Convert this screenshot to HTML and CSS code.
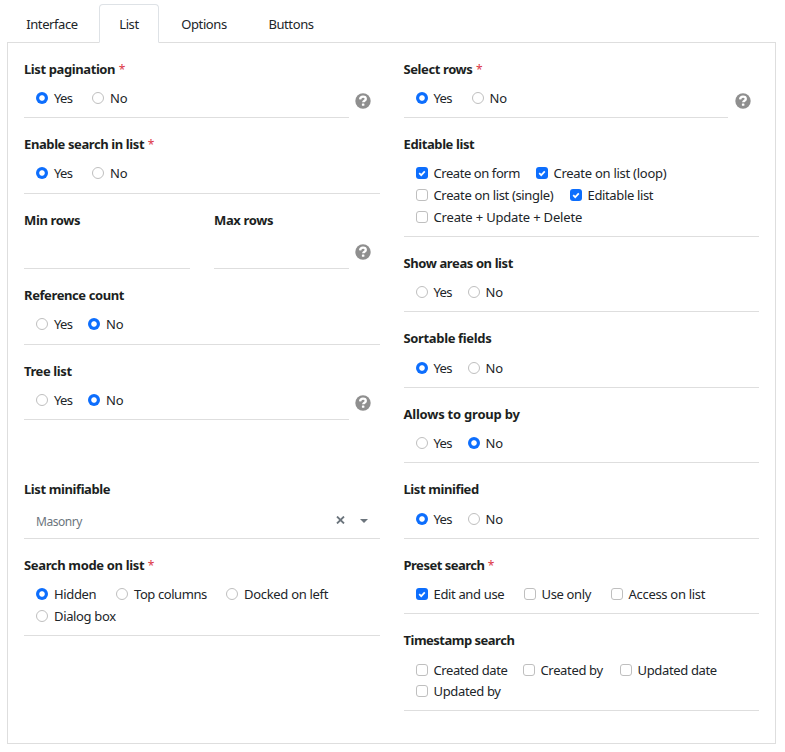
FILE: index.html
```html
<!DOCTYPE html>
<html lang="en">
<head>
<meta charset="utf-8">
<title>List settings</title>
<link rel="stylesheet" href="styles.css">
</head>
<body>
<svg class="defs" width="0" height="0" aria-hidden="true">
  <symbol id="help" viewBox="0 0 16 16">
    <circle cx="8" cy="8" r="7.7" fill="#8f8f8f"/>
    <path d="M5.1 6.3C5.3 4.4 6.5 3.7 8 3.7c1.6 0 2.8.9 2.8 2.2 0 1.8-2.6 1.7-2.6 3.4" fill="none" stroke="#fff" stroke-width="2.3"/>
    <rect x="6.9" y="10.4" width="2.5" height="2.4" rx=".6" fill="#fff"/>
  </symbol>
  <symbol id="tick" viewBox="0 0 12 12">
    <path d="M3.2 6.2l2 2 3.6-3.9" fill="none" stroke="#fff" stroke-width="1.7"/>
  </symbol>
</svg>
<nav class="tabs">
  <a class="tab tab-interface">Interface</a>
  <a class="tab tab-list active">List</a>
  <a class="tab tab-options">Options</a>
  <a class="tab tab-buttons">Buttons</a>
</nav>
<main class="panel">
  <section class="group">
    <div class="column">
      <div class="with-help">
        <div class="field required"><h3>List pagination <em>*</em></h3>
          <div class="options"><label class="yes"><i class="radio on"></i><span>Yes</span></label><label><i class="radio"></i><span>No</span></label></div></div>
        <svg class="help"><use href="#help"/></svg>
      </div>
      <div class="field tall raised required"><h3>Enable search in list <em>*</em></h3>
        <div class="options"><label class="yes"><i class="radio on"></i><span>Yes</span></label><label><i class="radio"></i><span>No</span></label></div></div>
      <div class="with-help">
        <div class="pair">
          <div class="field"><h3 class="loose">Min rows</h3></div>
          <div class="field"><h3 class="loose">Max rows</h3></div>
        </div>
        <svg class="help"><use href="#help"/></svg>
      </div>
      <div class="field tall raised"><h3>Reference count</h3>
        <div class="options"><label class="yes"><i class="radio"></i><span>Yes</span></label><label><i class="radio on"></i><span>No</span></label></div></div>
      <div class="with-help">
        <div class="field"><h3>Tree list</h3>
          <div class="options"><label class="yes"><i class="radio"></i><span>Yes</span></label><label><i class="radio on"></i><span>No</span></label></div></div>
        <svg class="help"><use href="#help"/></svg>
      </div>
    </div>
    <div class="column">
      <div class="with-help">
        <div class="field required"><h3>Select rows <em>*</em></h3>
          <div class="options"><label class="yes"><i class="radio on"></i><span>Yes</span></label><label><i class="radio"></i><span>No</span></label></div></div>
        <svg class="help"><use href="#help"/></svg>
      </div>
      <div class="field rows-3"><h3>Editable list</h3>
        <div class="options"><label class="create-form"><svg class="check on"><use href="#tick"/></svg><span>Create on form</span></label><label class="create-loop"><svg class="check on"><use href="#tick"/></svg><span>Create on list (loop)</span></label><label class="create-single"><i class="check"></i><span>Create on list (single)</span></label><label><svg class="check on"><use href="#tick"/></svg><span>Editable list</span></label><label class="create-all"><i class="check"></i><span>Create + Update + Delete</span></label></div></div>
      <div class="field"><h3>Show areas on list</h3>
        <div class="options"><label class="yes"><i class="radio"></i><span>Yes</span></label><label><i class="radio"></i><span>No</span></label></div></div>
      <div class="field tall"><h3 class="loose">Sortable fields</h3>
        <div class="options"><label class="yes"><i class="radio on"></i><span>Yes</span></label><label><i class="radio"></i><span>No</span></label></div></div>
      <div class="field"><h3 class="looser">Allows to group by</h3>
        <div class="options"><label class="yes"><i class="radio"></i><span>Yes</span></label><label><i class="radio on"></i><span>No</span></label></div></div>
    </div>
  </section>
  <section class="group">
    <div class="column">
      <div class="field tall"><h3>List minifiable</h3>
        <div class="select"><span>Masonry</span>
          <svg class="clear" width="9" height="8" viewBox="0 0 9 8"><path d="M1 .5l7 7M8 .5l-7 7" stroke="#6c757d" stroke-width="1.8"/></svg>
          <svg class="caret" width="8" height="4" viewBox="0 0 8 4"><path d="M0 0h8L4 4z" fill="#6c757d"/></svg>
        </div></div>
      <div class="field rows-2 required"><h3 class="loose">Search mode on list <em>*</em></h3>
        <div class="options"><label class="hidden-mode"><i class="radio on"></i><span>Hidden</span></label><label class="top-columns"><i class="radio"></i><span>Top columns</span></label><label class="docked"><i class="radio"></i><span>Docked on left</span></label><label><i class="radio"></i><span>Dialog box</span></label></div></div>
    </div>
    <div class="column">
      <div class="field tall"><h3>List minified</h3>
        <div class="options"><label class="yes"><i class="radio on"></i><span>Yes</span></label><label><i class="radio"></i><span>No</span></label></div></div>
      <div class="field required"><h3 class="tight">Preset search <em>*</em></h3>
        <div class="options"><label class="edit-use"><svg class="check on"><use href="#tick"/></svg><span>Edit and use</span></label><label class="use-only"><i class="check"></i><span>Use only</span></label><label class="access"><i class="check"></i><span>Access on list</span></label></div></div>
      <div class="field rows-2 compact"><h3 class="tight">Timestamp search</h3>
        <div class="options"><label class="created-date"><i class="check"></i><span>Created date</span></label><label class="created-by"><i class="check"></i><span>Created by</span></label><label><i class="check"></i><span>Updated date</span></label><label><i class="check"></i><span>Updated by</span></label></div></div>
    </div>
  </section>
</main>
</body>
</html>
```
FILE: styles.css
```css
* { box-sizing: border-box; }
body {
  margin: 0;
  padding: 4px 9px 8px 7px;
  background: #fff;
  color: #212529;
  font: 13px/20px "Noto Sans", sans-serif;
  letter-spacing: -.35px;
}
.defs { position: absolute; }
.tabs { display: flex; height: 38px; }
.tab { display: flex; justify-content: center; padding-top: 9px; height: 39px; border: 1px solid transparent; letter-spacing: -.4px; }
.tab-interface { width: 90px; margin-right: 2px; }
.tab-list { width: 60px; margin-right: 2px; }
.tab-options { width: 86px; margin-right: 2px; }
.tab-buttons { width: 84px; }
.tab.active { z-index: 1; background: #fff; border-color: #dee2e6 #dee2e6 #fff; border-radius: 4px 4px 0 0; }
.panel { height: 702px; border: 1px solid #dedede; padding: 0 16px; }
.group { display: grid; grid-template-columns: 356px 355px; column-gap: 23.5px; }
.column { display: flex; flex-direction: column; }
.field { flex: none; height: 75px; border-bottom: 1px solid #dedede; padding-top: 16px; display: flex; flex-direction: column; justify-content: space-between; }
.field.tall { height: 76px; }
.field.rows-2 { height: 97px; }
.field.rows-3 { height: 119px; }
h3 { margin: 0; font-size: 13px; line-height: 20px; font-weight: 700; letter-spacing: -.4px; color: #1c1f22; white-space: nowrap; }
h3.loose { letter-spacing: -.35px; }
h3.looser { letter-spacing: -.22px; }
h3.tight { letter-spacing: -.5px; }
em { margin-left: .5px; color: #dc3545; font-size: 12px; font-style: normal; font-weight: 400; }
.with-help { display: flex; gap: 6.4px; }
.with-help > .field, .pair { width: 325px; }
.column + .column .with-help { gap: 7.5px; }
.column + .column .with-help > .field { width: 324px; }
.pair { display: grid; grid-template-columns: 166px 135px; gap: 24px; }
.help { width: 16px; height: 16px; margin-top: 50px; }
.options { display: flex; flex-wrap: wrap; column-gap: 16px; padding-left: 12px; margin-bottom: 8px; }
.raised .options { margin-bottom: 9px; }
.compact .options { margin-bottom: 9px; }
.required .options { column-gap: 20px; }
label { display: flex; align-items: center; gap: 6px; height: 22px; white-space: nowrap; }
.compact label { height: 21px; }
.yes { width: 36px; letter-spacing: -.7px; }
.yes + label { letter-spacing: -.2px; }
.create-form { width: 104px; letter-spacing: -.43px; }
.create-loop { letter-spacing: -.27px; }
.create-single { width: 138px; }
.create-all { letter-spacing: -.17px; }
.hidden-mode { width: 60px; }
.top-columns { width: 90px; letter-spacing: -.42px; }
.docked, .access { letter-spacing: -.3px; }
.edit-use { width: 88px; }
.use-only { width: 67px; }
.created-date { width: 91px; letter-spacing: -.4px; }
.created-by { width: 81px; }
.radio, .check { flex: none; width: 12px; height: 12px; border: 1px solid #bfbfbf; background: #fff; }
.radio { border-radius: 50%; }
.radio.on { border: 0; background: radial-gradient(circle, #fff 2.3px, #0d6efd 3.2px); }
.check { border-radius: 3px; }
.check.on { border: 0; background: #0d6efd; }
.select { display: flex; align-items: center; height: 20px; margin-bottom: 6px; padding: 0 12px; color: #6c757d; font-size: 12px; }
.select span { flex: 1; letter-spacing: -.45px; }
.select .clear { margin-top: -4px; }
.select .caret { margin: -2px 0 0 15px; }
```
